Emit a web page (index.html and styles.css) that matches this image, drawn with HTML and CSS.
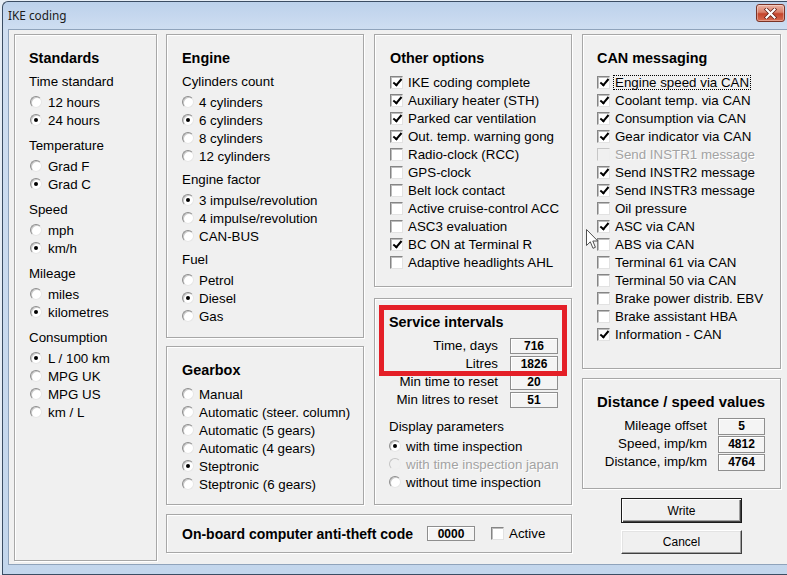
FILE: index.html
```html
<!DOCTYPE html>
<html>
<head>
<meta charset="utf-8">
<title>IKE coding</title>
<link rel="stylesheet" href="styles.css">
</head>
<body>
<div class="window">
  <div class="titlebar">
    <span class="title">IKE coding</span>
    <div class="close"><svg width="15" height="11" viewBox="0 0 15 11"><path d="M3.5 1.5 L11.5 9.5 M11.5 1.5 L3.5 9.5" stroke="#5a1a10" stroke-width="3.6" stroke-linecap="square"/><path d="M3.5 1.5 L11.5 9.5 M11.5 1.5 L3.5 9.5" stroke="#fff" stroke-width="2.2" stroke-linecap="square"/></svg></div>
  </div>
  <div class="client">
    <div class="group g-standards">
      <div class="gtitle">Standards</div>
      <div class="label">Time standard</div>
      <div class="opt"><span class="radio"></span>12 hours</div>
      <div class="opt"><span class="radio on"></span>24 hours</div>
      <div class="label sec">Temperature</div>
      <div class="opt"><span class="radio"></span>Grad F</div>
      <div class="opt"><span class="radio on"></span>Grad C</div>
      <div class="label sec">Speed</div>
      <div class="opt"><span class="radio"></span>mph</div>
      <div class="opt"><span class="radio on"></span>km/h</div>
      <div class="label sec">Mileage</div>
      <div class="opt"><span class="radio"></span>miles</div>
      <div class="opt"><span class="radio on"></span>kilometres</div>
      <div class="label sec">Consumption</div>
      <div class="opt"><span class="radio on"></span>L / 100 km</div>
      <div class="opt"><span class="radio"></span>MPG UK</div>
      <div class="opt"><span class="radio"></span>MPG US</div>
      <div class="opt"><span class="radio"></span>km / L</div>
    </div>

    <div class="mid">
      <div class="mid-cols">
        <div class="col col2">
          <div class="group g-engine">
            <div class="gtitle">Engine</div>
            <div class="label">Cylinders count</div>
            <div class="opt"><span class="radio"></span>4 cylinders</div>
            <div class="opt"><span class="radio on"></span>6 cylinders</div>
            <div class="opt"><span class="radio"></span>8 cylinders</div>
            <div class="opt"><span class="radio"></span>12 cylinders</div>
            <div class="label sec">Engine factor</div>
            <div class="opt"><span class="radio on"></span>3 impulse/revolution</div>
            <div class="opt"><span class="radio"></span>4 impulse/revolution</div>
            <div class="opt"><span class="radio"></span>CAN-BUS</div>
            <div class="label sec">Fuel</div>
            <div class="opt"><span class="radio"></span>Petrol</div>
            <div class="opt"><span class="radio on"></span>Diesel</div>
            <div class="opt"><span class="radio"></span>Gas</div>
          </div>
          <div class="group g-gearbox">
            <div class="gtitle">Gearbox</div>
            <div class="opt"><span class="radio"></span>Manual</div>
            <div class="opt"><span class="radio"></span>Automatic (steer. column)</div>
            <div class="opt"><span class="radio"></span>Automatic (5 gears)</div>
            <div class="opt"><span class="radio"></span>Automatic (4 gears)</div>
            <div class="opt"><span class="radio on"></span>Steptronic</div>
            <div class="opt"><span class="radio"></span>Steptronic (6 gears)</div>
          </div>
        </div>
        <div class="col col3">
          <div class="group g-other">
            <div class="gtitle">Other options</div>
            <div class="opt"><span class="cb on"></span>IKE coding complete</div>
            <div class="opt"><span class="cb on"></span>Auxiliary heater (STH)</div>
            <div class="opt"><span class="cb on"></span>Parked car ventilation</div>
            <div class="opt"><span class="cb on"></span>Out. temp. warning gong</div>
            <div class="opt"><span class="cb"></span>Radio-clock (RCC)</div>
            <div class="opt"><span class="cb"></span>GPS-clock</div>
            <div class="opt"><span class="cb"></span>Belt lock contact</div>
            <div class="opt"><span class="cb"></span>Active cruise-control ACC</div>
            <div class="opt"><span class="cb"></span>ASC3 evaluation</div>
            <div class="opt"><span class="cb on"></span>BC ON at Terminal R</div>
            <div class="opt"><span class="cb"></span>Adaptive headlights AHL</div>
          </div>
          <div class="group g-service">
            <div class="gtitle">Service intervals</div>
            <div class="srow"><span class="slabel">Time, days</span><span class="val">716</span></div>
            <div class="srow"><span class="slabel">Litres</span><span class="val">1826</span></div>
            <div class="srow"><span class="slabel">Min time to reset</span><span class="val">20</span></div>
            <div class="srow"><span class="slabel">Min litres to reset</span><span class="val">51</span></div>
            <div class="label dp">Display parameters</div>
            <div class="opt"><span class="radio on"></span>with time inspection</div>
            <div class="opt disabled"><span class="radio dis"></span>with time inspection japan</div>
            <div class="opt"><span class="radio"></span>without time inspection</div>
          </div>
        </div>
      </div>
      <div class="group g-antitheft">
        <span class="at-title">On-board computer anti-theft code</span>
        <span class="val at-val">0000</span>
        <span class="cb at-cb"></span>
        <span class="at-text">Active</span>
      </div>
    </div>

    <div class="col col4">
      <div class="group g-can">
        <div class="gtitle">CAN messaging</div>
        <div class="opt"><span class="cb on"></span><span class="focus">Engine speed via CAN</span></div>
        <div class="opt"><span class="cb on"></span>Coolant temp. via CAN</div>
        <div class="opt"><span class="cb on"></span>Consumption via CAN</div>
        <div class="opt"><span class="cb on"></span>Gear indicator via CAN</div>
        <div class="opt disabled"><span class="cb dis"></span>Send INSTR1 message</div>
        <div class="opt"><span class="cb on"></span>Send INSTR2 message</div>
        <div class="opt"><span class="cb on"></span>Send INSTR3 message</div>
        <div class="opt"><span class="cb"></span>Oil pressure</div>
        <div class="opt"><span class="cb on"></span>ASC via CAN</div>
        <div class="opt"><span class="cb"></span>ABS via CAN</div>
        <div class="opt"><span class="cb"></span>Terminal 61 via CAN</div>
        <div class="opt"><span class="cb"></span>Terminal 50 via CAN</div>
        <div class="opt"><span class="cb"></span>Brake power distrib. EBV</div>
        <div class="opt"><span class="cb"></span>Brake assistant HBA</div>
        <div class="opt"><span class="cb on"></span>Information - CAN</div>
      </div>
      <div class="group g-distance">
        <div class="gtitle dtitle">Distance / speed values</div>
        <div class="drow"><span class="slabel">Mileage offset</span><span class="val dval">5</span></div>
        <div class="drow"><span class="slabel">Speed, imp/km</span><span class="val dval">4812</span></div>
        <div class="drow"><span class="slabel">Distance, imp/km</span><span class="val dval">4764</span></div>
      </div>
      <div class="btn btn-default">Write</div>
      <div class="btn btn-cancel">Cancel</div>
    </div>
  </div>
</div>
<div class="annotation"></div>
<svg class="cursor" width="13" height="21" viewBox="0 0 13 21"><path d="M0.5 0.5 L0.5 16.5 L4.3 12.8 L7 19.3 L9.4 18.3 L6.8 12 L11.8 12 Z" fill="#fff" stroke="#505050" stroke-width="1"/></svg>
</body>
</html>
```

FILE: styles.css
```css
* { box-sizing: border-box; }
html, body { margin: 0; padding: 0; }
body {
  width: 787px;
  height: 575px;
  overflow: hidden;
  position: relative;
  background: #e6edf5;
  font-family: "Liberation Sans", Arial, sans-serif;
  font-size: 13.33px;
  color: #000;
}
.window {
  margin: 1px 0 0 2px;
  width: 785px;
  height: 574px;
  border: 1px solid #3b4d63;
  border-right: none;
  border-radius: 6px 0 0 0;
  background: linear-gradient(#bcd1eb, #cfdef1 28px, #c3d6ec);
}
.titlebar {
  height: 27px;
  display: flex;
  justify-content: space-between;
  align-items: flex-start;
}
.title {
  margin: 5px 0 0 5px;
  font-family: "Noto Sans", "DejaVu Sans", sans-serif;
  font-size: 11.8px;
  line-height: 16px;
  color: #1b1b1b;
}
.close {
  width: 29px;
  height: 18px;
  margin: 2px 2px 0 0;
  border: 1px solid #7a3326;
  border-radius: 3px;
  background: linear-gradient(#ecb3a4, #d9806a 45%, #c4452c 55%, #d86d52);
  display: flex;
  align-items: center;
  justify-content: center;
  box-shadow: inset 0 0 0 1px rgba(255,255,255,0.35);
}
.client {
  margin-left: 5px;
  height: 536px;
  border: 1px solid #8fa3bb;
  border-right: none;
  background: #f0f0f0;
  display: flex;
  align-items: flex-start;
  padding: 4px 0 0 5px;
}
.group {
  border: 1px solid #a7a7a7;
  box-shadow: inset 1px 1px 0 #fff, 1px 1px 0 #fff;
  padding-top: 14px;
  flex: none;
}
.gtitle {
  font-weight: bold;
  font-size: 14.4px;
  line-height: 18px;
  height: 18px;
  margin-bottom: 6px;
  white-space: nowrap;
}
.gtitle.dtitle { font-size: 14.9px; }
.label {
  line-height: 18px;
  height: 18px;
  margin-bottom: 2px;
  white-space: nowrap;
}
.label.sec { margin-top: 6px; }
.g-standards .label.sec { margin-top: 8px; }
.opt {
  display: flex;
  align-items: center;
  height: 18px;
  white-space: nowrap;
}
.disabled { color: #a3a3a3; text-shadow: 1px 1px 0 #fff; }

.radio {
  flex: none;
  width: 12px;
  height: 12px;
  margin-right: 5px;
  border-radius: 50%;
  background: #fff;
  border: 1px solid;
  border-color: #8d8d8d #e6e6e6 #e6e6e6 #8d8d8d;
  box-shadow: inset 1px 1px 0 #c9c9c9;
  display: flex;
  align-items: center;
  justify-content: center;
}
.radio.on::after {
  content: "";
  width: 4px;
  height: 4px;
  border-radius: 50%;
  background: #000;
}
.radio.dis { background: #f0f0f0; border-color: #c4c4c4 #eee #eee #c4c4c4; box-shadow: none; }
.g-standards .radio { margin: 0 6px 0 1px; }

.cb {
  flex: none;
  position: relative;
  width: 13px;
  height: 13px;
  margin-right: 5px;
  background: #fff;
  border: 1px solid;
  border-color: #858585 #e2e2e2 #e2e2e2 #858585;
  box-shadow: inset 1px 1px 0 #bdbdbd;
}
.cb.on::after {
  content: "";
  position: absolute;
  left: 3.5px;
  top: 0.5px;
  width: 3px;
  height: 7px;
  border: solid #000;
  border-width: 0 2px 2px 0;
  transform: rotate(40deg);
}
.cb.dis { background: #f0f0f0; border-color: #c6c6c6 #eee #eee #c6c6c6; box-shadow: none; }

.focus {
  display: inline-block;
  border: 1px dotted #000;
  line-height: 13px;
  padding: 0 1px;
  margin-left: -2px;
}

/* columns */
.g-standards { width: 143px; height: 527px; padding-left: 14px; margin-right: 9px; }
.mid { width: 406px; display: flex; flex-direction: column; flex: none; }
.mid-cols { display: flex; gap: 10px; }
.col { display: flex; flex-direction: column; flex: none; }
.col2, .col3 { width: 198px; }
.g-engine { height: 304px; padding-left: 15px; }
.g-gearbox { height: 159px; margin-top: 8px; padding-left: 15px; }
.g-other { height: 253px; padding-left: 15px; }
.g-service { height: 207px; margin-top: 11px; padding-left: 14px; }
.g-antitheft {
  height: 39px;
  margin-top: 9px;
  padding: 0 0 0 15px;
  display: flex;
  align-items: center;
}
.col4 { width: 199px; margin-left: 10px; }
.g-can { height: 335px; padding-left: 14px; }
.g-distance { height: 111px; margin-top: 9px; padding-left: 14px; }

/* value rows */
.srow {
  display: grid;
  grid-template-columns: 109px 48px;
  column-gap: 12px;
  height: 18px;
  align-items: center;
}
.drow {
  display: grid;
  grid-template-columns: 110px 47px;
  column-gap: 11px;
  height: 18px;
  align-items: center;
}
.slabel { text-align: right; white-space: nowrap; line-height: 18px; }
.val {
  height: 16px;
  border: 1px solid #8e8e8e;
  background: #f4f4f4;
  box-shadow: inset 1px 1px 0 #fff;
  font-weight: bold;
  font-size: 12px;
  display: flex;
  align-items: center;
  justify-content: center;
}
.dval { height: 17px; }
.label.dp { margin-top: 9px; margin-bottom: 1px; }

.at-title { font-weight: bold; font-size: 14px; white-space: nowrap; margin-right: 14px; }
.at-val { width: 48px; height: 15px; flex: none; }
.at-cb { margin-left: 16px; }
.at-text { white-space: nowrap; }

/* buttons */
.btn {
  width: 121px;
  margin-left: 39px;
  background: #f0f0f0;
  font-size: 12px;
  display: flex;
  align-items: center;
  justify-content: center;
}
.btn-default {
  height: 25px;
  margin-top: 9px;
  border: 1px solid #1a1a1a;
  box-shadow: inset 1px 1px 0 #fff, inset -1px -1px 0 #404040, inset -2px -2px 0 #a0a0a0;
}
.btn-cancel {
  height: 24px;
  margin-top: 7px;
  border: 1px solid;
  border-color: #fff #404040 #404040 #fff;
  box-shadow: inset -1px -1px 0 #a0a0a0, inset 1px 1px 0 #e3e3e3;
}

/* overlays */
.annotation {
  position: absolute;
  left: 379px;
  top: 305px;
  width: 188px;
  height: 71px;
  border: 5px solid #e41f27;
}
.cursor {
  position: absolute;
  left: 586px;
  top: 229px;
}
```
